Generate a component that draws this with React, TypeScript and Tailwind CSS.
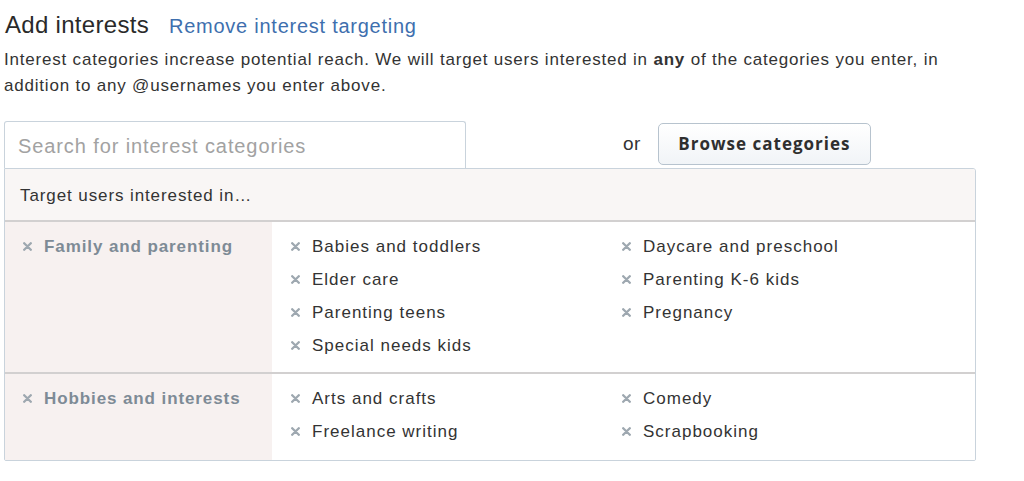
import React from "react";

const sans = { fontFamily: '"Liberation Sans", Arial, Helvetica, sans-serif' };

function X({ w }: { w: string }) {
  return (
    <span className={`${w} flex items-center`}>
      <svg width="9" height="9" viewBox="0 0 9 9" className="mt-[-1px]">
        <path d="M1.2 1.2 L7.8 7.8 M7.8 1.2 L1.2 7.8" stroke="#9ea8b0" strokeWidth="2.3" strokeLinecap="round" />
      </svg>
    </span>
  );
}

function Item({ label }: { label: string }) {
  return (
    <div className="flex items-center h-[33px]">
      <X w="w-[21px]" />
      <span className="text-[17px] tracking-[1px] text-[#333]">{label}</span>
    </div>
  );
}

function Group({
  name,
  items,
  last,
}: {
  name: string;
  items: string[];
  last?: boolean;
}) {
  return (
    <div className={`flex ${last ? "" : "border-b-2 border-[#d2d0d0]"}`}>
      <div className="w-[267px] bg-[#f7f1f0] pt-2 pl-[18px]">
        <div className="flex items-center h-[33px]">
          <X w="w-[21px]" />
          <span className="text-[17px] tracking-[0.9px] font-bold text-[#7e8b96]">{name}</span>
        </div>
      </div>
      <div className={`flex-1 grid grid-cols-[331px_1fr] pl-[19px] pt-2 ${last ? "pb-3" : "pb-[10px]"} bg-white`}>
        {items.map((it) => (
          <Item key={it} label={it} />
        ))}
      </div>
    </div>
  );
}

export default function App() {
  return (
    <div className="w-[1024px] h-[481px] bg-white overflow-hidden" style={sans}>
      <div className="pl-[5px] pt-[10px] flex items-baseline gap-[20px]">
        <h1 className="text-[24px] tracking-[0.3px] text-[#2a2a2a] leading-[30px]">Add interests</h1>
        <a className="text-[20px] tracking-[0.75px] text-[#3e6fae]">Remove interest targeting</a>
      </div>
      <p className="pl-[4px] mt-[6px] text-[17px] tracking-[0.8px] leading-[26px] text-[#333] w-[990px]">
        Interest categories increase potential reach. We will target users interested in{" "}
        <b>any</b> of the categories you enter, in addition to any @usernames you enter above.
      </p>
      <div className="ml-[4px] mt-[22px] w-[972px]">
        <div className="flex items-end">
          <div className="w-[462px] h-[47px] border border-b-0 border-[#c9d3dc] rounded-tl-[3px] rounded-tr-[3px] flex items-center pl-[13px] pt-[2px]">
            <span className="text-[20px] tracking-[0.9px] text-[#a2a2a2]">Search for interest categories</span>
          </div>
          <div className="flex-1 flex items-center self-start pt-[2px]">
            <span className="ml-[157px] text-[19px] tracking-[0.5px] text-[#333]">or</span>
            <button
              className="ml-[17px] w-[213px] h-[42px] border border-[#b7c3ce] rounded-[5px] bg-gradient-to-b from-white to-[#f1f4f7] text-[17px] tracking-[1px] font-bold text-[#2f2f2f]"
              style={{ fontFamily: '"Open Sans", "Noto Sans", sans-serif' }}
            >
              Browse categories
            </button>
          </div>
        </div>
        <div className="border border-[#c9d3dc] rounded-tr-[3px] rounded-b-[2px] overflow-hidden">
          <div className="h-[53px] bg-[#f9f6f5] border-b-2 border-[#d2d0d0] flex items-center pl-[15px] pt-[3px]">
            <span className="text-[17px] tracking-[0.9px] text-[#333]">Target users interested in…</span>
          </div>
          <Group
            name="Family and parenting"
            items={[
              "Babies and toddlers",
              "Daycare and preschool",
              "Elder care",
              "Parenting K-6 kids",
              "Parenting teens",
              "Pregnancy",
              "Special needs kids",
            ]}
          />
          <Group
            name="Hobbies and interests"
            items={["Arts and crafts", "Comedy", "Freelance writing", "Scrapbooking"]}
            last
          />
        </div>
      </div>
    </div>
  );
}
